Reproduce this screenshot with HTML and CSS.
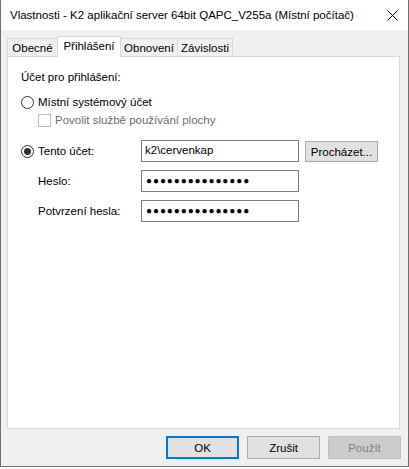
FILE: index.html
```html
<!DOCTYPE html>
<html lang="cs">
<head>
<meta charset="utf-8">
<title>Vlastnosti</title>
<link rel="stylesheet" href="styles.css">
</head>
<body>
<div class="window">
  <div class="titlebar">
    <span class="title">Vlastnosti - K2 aplikační server 64bit QAPC_V255a (Místní počítač)</span>
    <svg class="close" width="11" height="11" viewBox="0 0 11 11"><path d="M0.5 0.5 L10.5 10.5 M10.5 0.5 L0.5 10.5" stroke="#000" stroke-width="1" fill="none"/></svg>
  </div>
  <div class="body">
    <div class="tabs">
      <div class="tab t1">Obecné</div>
      <div class="tab t2 selected">Přihlášení</div>
      <div class="tab t3">Obnovení</div>
      <div class="tab t4">Závislosti</div>
    </div>
    <div class="panel">
      <div class="caption">Účet pro přihlášení:</div>
      <div class="option-row"><span class="radio"></span><span>Místní systémový účet</span></div>
      <div class="check-row"><span class="checkbox"></span><span>Povolit službě používání plochy</span></div>
      <div class="form-grid">
        <div class="lbl"><span class="radio checked"></span><span>Tento účet:</span></div>
        <div class="field">k2\cervenkap</div>
        <div class="btn browse">Procházet...</div>
        <div class="lbl indent">Heslo:</div>
        <div class="field pw">●●●●●●●●●●●●●●●</div>
        <div></div>
        <div class="lbl indent">Potvrzení hesla:</div>
        <div class="field pw">●●●●●●●●●●●●●●●</div>
        <div></div>
      </div>
    </div>
    <div class="buttons">
      <div class="btn default">OK</div>
      <div class="btn">Zrušit</div>
      <div class="btn disabled">Použít</div>
    </div>
  </div>
</div>
</body>
</html>
```
FILE: styles.css
```css
* { box-sizing: border-box; }
html, body { margin: 0; padding: 0; }
body {
  background: #ffffff;
  font-family: "Liberation Sans", Arial, sans-serif;
  font-size: 11.5px;
  color: #000;
  width: 409px;
  height: 469px;
  overflow: hidden;
}
.window {
  width: 409px;
  height: 467px;
  border: 1px solid #6f6f6f;
  border-top: none;
  display: flex;
  flex-direction: column;
  background: #f0f0f0;
}
.titlebar {
  height: 30px;
  background: #ffffff;
  display: flex;
  align-items: center;
  padding-left: 9px;
  padding-right: 10px;
  flex: none;
}
.title {
  line-height: 16px;
  white-space: nowrap;
}
.close {
  margin-left: auto;
  display: block;
}
.body {
  flex: 1;
  padding: 6px 7px 0 6px;
  display: flex;
  flex-direction: column;
}
.tabs {
  display: flex;
  align-items: flex-end;
  height: 20px;
  position: relative;
  z-index: 1;
}
.tab {
  height: 18px;
  border: 1px solid #d9d9d9;
  border-bottom: none;
  background: #f0f0f0;
  text-align: center;
  padding-top: 2px;
  line-height: 15px;
  white-space: nowrap;
}
.tab + .tab { margin-left: -1px; }
.t1 { width: 51px; }
.t2 { width: 64px; }
.t3 { width: 58px; }
.t4 { width: 56px; }
.tab.selected {
  height: 21px;
  margin-bottom: -1px;
  background: #ffffff;
  position: relative;
  z-index: 2;
}
.panel {
  width: 393px;
  height: 373px;
  background: #ffffff;
  border: 1px solid #d9d9d9;
  padding: 12px 0 0 13px;
  flex: none;
}
.caption { line-height: 16px; }
.option-row, .check-row, .lbl {
  display: flex;
  align-items: center;
  line-height: 16px;
}
.option-row { margin-top: 9px; }
.check-row {
  margin-top: 2px;
  padding-left: 17px;
  color: #6d6d6d;
}
.radio {
  width: 13px;
  height: 13px;
  border: 1px solid #333333;
  border-radius: 50%;
  background: #fff;
  margin-right: 4px;
  flex: none;
  display: flex;
  align-items: center;
  justify-content: center;
}
.radio.checked::after {
  content: "";
  width: 7px;
  height: 7px;
  border-radius: 50%;
  background: #333333;
}
.checkbox {
  width: 13px;
  height: 13px;
  border: 1px solid #bcbcbc;
  background: #fff;
  margin-right: 4px;
  flex: none;
}
.form-grid {
  margin-top: 12px;
  display: grid;
  grid-template-columns: 114px 158px 73px;
  grid-auto-rows: 22px;
  column-gap: 6px;
  row-gap: 8px;
}
.indent { padding-left: 17px; }
.field {
  border: 1px solid #7a7a7a;
  background: #fff;
  padding-left: 3px;
  line-height: 19px;
  white-space: nowrap;
  overflow: hidden;
}
.field.pw {
  font-size: 10px;
  letter-spacing: 0.9px;
  padding-left: 4px;
  line-height: 20px;
}
.btn {
  width: 73px;
  height: 23px;
  border: 1px solid #adadad;
  background: #e1e1e1;
  display: flex;
  align-items: center;
  justify-content: center;
  line-height: 16px;
}
.btn.browse {
  height: 21px;
  margin-top: 1px;
}
.btn.default {
  border: 2px solid #0078d7;
}
.btn.disabled {
  background: #cccccc;
  border-color: #bfbfbf;
  color: #838383;
}
.buttons {
  display: flex;
  justify-content: flex-end;
  gap: 8px;
  margin-top: 7px;
}
```
